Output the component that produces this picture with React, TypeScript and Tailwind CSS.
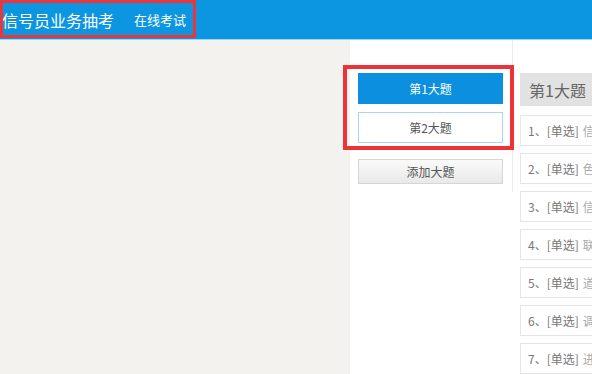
import React from "react";

const questions = [
  "信号设备维护规则中规定的内容是",
  "色灯信号机的灯光显示要求",
  "信号员在接发列车时应当",
  "联锁设备发生故障时",
  "道岔转换设备的检查项目",
  "调度命令的下达和执行",
  "进站信号机开放的条件",
];

export default function App() {
  return (
    <div
      className="relative w-[592px] h-[374px] overflow-hidden bg-[#f4f2ef]"
      style={{ fontFamily: '"Noto Sans CJK SC", "Noto Sans", sans-serif' }}
    >
      {/* Header */}
      <div className="h-[40px] bg-[#0c95e0] border-b border-[#9fd4f2] flex items-center text-white">
        <span className="ml-[2px] text-[16px] leading-none tracking-[0px]">信号员业务抽考</span>
        <span className="ml-[20px] text-[13px] leading-none">在线考试</span>
      </div>

      {/* Body */}
      <div className="flex h-[334px]">
        <div className="w-[350px] shrink-0" />
        <div className="flex-1 flex bg-white">
          {/* left column */}
          <div className="w-[163px] shrink-0">
            <div className="h-[152px] pt-[33px] pl-[8px] pr-[9px] flex flex-col border-r border-[#ececec]">
              <div className="h-[31px] bg-[#0b8fde] text-white text-[12px] flex items-center justify-center">
                第1大题
              </div>
              <div className="mt-[8px] h-[31px] bg-white border border-[#a9d6f2] text-[#555] text-[12px] flex items-center justify-center">
                第2大题
              </div>
              <div className="mt-[16px] h-[25px] bg-gradient-to-b from-[#fafafa] to-[#e9e9e9] border border-[#d6d6d6] text-[#555] text-[12px] flex items-center justify-center">
                添加大题
              </div>
            </div>
          </div>
          {/* right column */}
          <div className="flex-1 pl-[7px] pt-[33px] overflow-hidden">
            <div className="h-[33px] bg-[#e2e2e2] flex items-center pl-[9px] text-[16px] text-[#666] whitespace-nowrap">
              第1大题
            </div>
            <div className="mt-[9px] flex flex-col gap-[7px]">
              {questions.map((q, i) => (
                <div
                  key={i}
                  className="h-[31px] border border-[#e6e6e6] bg-white flex items-center pl-[7px] text-[12px] text-[#777] whitespace-nowrap overflow-hidden"
                >
                  {i + 1}、[单选] <span className="ml-[4px] text-[#aaa]">{q}</span>
                </div>
              ))}
            </div>
          </div>
        </div>
      </div>

      {/* Annotation boxes */}
      <div className="absolute left-0 top-0 w-[196px] h-[38px] border-[3px] border-[#e8363c] pointer-events-none" />
      <div className="absolute left-[343px] top-[65px] w-[171px] h-[85px] border-[4px] border-[#ee3338] pointer-events-none" />
    </div>
  );
}
